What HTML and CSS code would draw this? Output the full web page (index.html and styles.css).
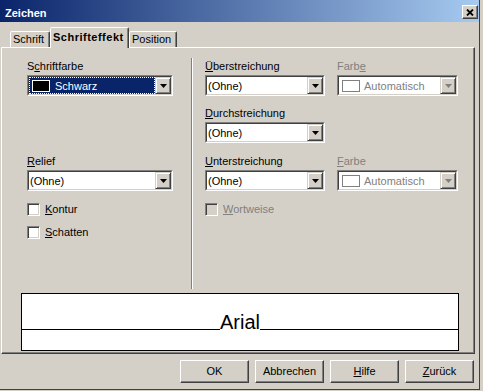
FILE: index.html
```html
<!DOCTYPE html>
<html>
<head>
<meta charset="utf-8">
<link rel="stylesheet" href="styles.css">
</head>
<body>
<div class="window">
  <div class="titlebar">
    <span class="title">Zeichen</span>
    <span class="close"><svg width="8" height="7" viewBox="0 0 8 7"><path d="M1 0.5 L7 6.5 M7 0.5 L1 6.5" stroke="#000" stroke-width="1.8" fill="none"/></svg></span>
  </div>
  <div class="tabs">
    <div class="tab t1">Schrift</div>
    <div class="tab active">Schrifteffekt</div>
    <div class="tab t3">Position</div>
  </div>
  <div class="panel">
    <div class="fields">
      <div class="field c1 r1">
        <div class="lbl">S<u>c</u>hriftfarbe</div>
        <div class="lb w146"><div class="lb-in"><div class="lb-text sel"><span class="sw black"></span>Schwarz</div><div class="dd"><svg width="7" height="4" viewBox="0 0 7 4"><path d="M0 0H7L3.5 4Z" fill="#000"/></svg></div></div></div>
      </div>
      <div class="sep"></div>
      <div class="field c3 r1">
        <div class="lbl"><u>Ü</u>berstreichung</div>
        <div class="lb w120"><div class="lb-in"><div class="lb-text">(Ohne)</div><div class="dd"><svg width="7" height="4" viewBox="0 0 7 4"><path d="M0 0H7L3.5 4Z" fill="#000"/></svg></div></div></div>
      </div>
      <div class="field c4 r1">
        <div class="lbl dis">Farb<u>e</u></div>
        <div class="lb w121"><div class="lb-in"><div class="lb-text dis"><span class="sw white"></span>Automatisch</div><div class="dd"><svg width="7" height="4" viewBox="0 0 7 4"><path d="M0 0H7L3.5 4Z" fill="#808080"/></svg></div></div></div>
      </div>
      <div class="field c3 r2">
        <div class="lbl"><u>D</u>urchstreichung</div>
        <div class="lb w120"><div class="lb-in"><div class="lb-text">(Ohne)</div><div class="dd"><svg width="7" height="4" viewBox="0 0 7 4"><path d="M0 0H7L3.5 4Z" fill="#000"/></svg></div></div></div>
      </div>
      <div class="field c1 r3">
        <div class="lbl"><u>R</u>elief</div>
        <div class="lb w146"><div class="lb-in"><div class="lb-text">(Ohne)</div><div class="dd"><svg width="7" height="4" viewBox="0 0 7 4"><path d="M0 0H7L3.5 4Z" fill="#000"/></svg></div></div></div>
      </div>
      <div class="field c3 r3">
        <div class="lbl"><u>U</u>nterstreichung</div>
        <div class="lb w120"><div class="lb-in"><div class="lb-text">(Ohne)</div><div class="dd"><svg width="7" height="4" viewBox="0 0 7 4"><path d="M0 0H7L3.5 4Z" fill="#000"/></svg></div></div></div>
      </div>
      <div class="field c4 r3">
        <div class="lbl dis"><u>F</u>arbe</div>
        <div class="lb w121"><div class="lb-in"><div class="lb-text dis"><span class="sw white"></span>Automatisch</div><div class="dd"><svg width="7" height="4" viewBox="0 0 7 4"><path d="M0 0H7L3.5 4Z" fill="#808080"/></svg></div></div></div>
      </div>
      <div class="check c1 r4"><span class="cb"></span><span><u>K</u>ontur</span></div>
      <div class="check c3 r4"><span class="cb off"></span><span class="dis"><u>W</u>ortweise</span></div>
      <div class="check c1 r5"><span class="cb"></span><span><u>S</u>chatten</span></div>
    </div>
    <div class="preview">
      <div class="pv-row"><div class="seg"></div><div class="pv-text">Arial</div><div class="seg"></div></div>
    </div>
  </div>
  <div class="buttons">
    <div class="btn">OK</div>
    <div class="btn">Abbrechen</div>
    <div class="btn"><u>H</u>ilfe</div>
    <div class="btn"><u>Z</u>urück</div>
  </div>
</div>
</body>
</html>
```

FILE: styles.css
```css
html, body {
  margin: 0;
  padding: 0;
}
body {
  width: 483px;
  height: 391px;
  overflow: hidden;
  background: #d4d0c8;
  font-family: "Liberation Sans", Arial, sans-serif;
  font-size: 11px;
  color: #000;
}
u {
  text-decoration: underline;
  text-underline-offset: 1px;
}
.window {
  width: 480px;
  height: 390px;
  box-sizing: border-box;
  border-right: 1px solid #404040;
  border-bottom: 1px solid #404040;
  display: flex;
  flex-direction: column;
}
.titlebar {
  height: 22px;
  flex: none;
  background: linear-gradient(to right, #0a246a, #a6caf0);
  display: flex;
  align-items: flex-start;
  justify-content: space-between;
  padding-left: 5px;
}
.title {
  color: #fff;
  font-weight: bold;
  font-size: 11px;
  line-height: 13px;
  margin-top: 7px;
}
.close {
  width: 16px;
  height: 14px;
  margin-top: 5px;
  margin-right: 1px;
  box-sizing: border-box;
  background: #d4d0c8;
  border: 1px solid;
  border-color: #fff #404040 #404040 #fff;
  box-shadow: inset -1px -1px #808080;
  display: flex;
  align-items: center;
  justify-content: center;
}
.tabs {
  display: flex;
  align-items: flex-end;
  height: 20px;
  margin-top: 5px;
  padding-left: 10px;
  flex: none;
}
.tab {
  height: 16px;
  box-sizing: border-box;
  border: 1px solid;
  border-bottom: none;
  border-color: #fff #404040 transparent #fff;
  box-shadow: inset -1px 0 #808080;
  border-radius: 2px 2px 0 0;
  padding: 0 2px;
  display: flex;
  align-items: center;
  line-height: 13px;
  background: #d4d0c8;
  white-space: nowrap;
  overflow: hidden;
}
.t1 { width: 40px; }
.t3 { width: 48px; }
.tab.active {
  width: 79px;
  height: 21px;
  margin-bottom: -1px;
  position: relative;
  z-index: 1;
  font-weight: bold;
  font-size: 11px;
  letter-spacing: 0.5px;
  padding: 0 0 1px 2px;
}
.panel {
  margin-left: 1px;
  width: 474px;
  box-sizing: border-box;
  border: 1px solid;
  border-color: #fff #404040 #404040 #fff;
  box-shadow: inset -1px -1px #808080;
  padding: 12px 0 2px 0;
  flex: none;
}
.fields {
  display: grid;
  margin-left: 25px;
  grid-template-columns: 146px 32px 132px 121px;
  grid-template-rows: 47px 48px 48px 23px 63px;
  align-items: start;
}
.c1 { grid-column: 1; }
.c3 { grid-column: 3; }
.c4 { grid-column: 4; }
.r1 { grid-row: 1; }
.r2 { grid-row: 2; }
.r3 { grid-row: 3; }
.r4 { grid-row: 4; }
.r5 { grid-row: 5; }
.sep {
  grid-column: 2;
  grid-row: 1 / 6;
  align-self: stretch;
  width: 2px;
  box-sizing: border-box;
  margin-left: 18px;
  margin-top: -2px;
  border-left: 1px solid #808080;
  border-right: 1px solid #fff;
}
.field {
  display: flex;
  flex-direction: column;
  gap: 2px;
}
.lbl {
  height: 13px;
  line-height: 13px;
  white-space: nowrap;
}
.dis { color: #808080; }
.lb {
  height: 21px;
  box-sizing: border-box;
  border: 1px solid;
  border-color: #808080 #fff #fff #808080;
  background: #fff;
  display: flex;
}
.w146 { width: 146px; }
.w120 { width: 120px; }
.w121 { width: 121px; }
.lb-in {
  flex: 1;
  display: flex;
  border: 1px solid;
  border-color: #404040 #d4d0c8 #d4d0c8 #404040;
  min-width: 0;
}
.lb-text {
  flex: 1;
  display: flex;
  align-items: center;
  padding-left: 1px;
  white-space: nowrap;
  overflow: hidden;
}
.lb-text.sel {
  background: #0a246a;
  color: #fff;
  outline: 1px dotted #fff;
  outline-offset: -1px;
  padding-left: 3px;
}
.lb-text.dis {
  padding-left: 3px;
}
.sw {
  width: 18px;
  height: 12px;
  box-sizing: border-box;
  margin-right: 5px;
  flex: none;
}
.sw.black {
  background: #000;
  border: 1px solid #fff;
}
.sw.white {
  background: #fff;
  border: 1px solid #808080;
  margin-right: 4px;
}
.dd {
  width: 16px;
  height: 17px;
  box-sizing: border-box;
  flex: none;
  background: #d4d0c8;
  border: 1px solid;
  border-color: #d4d0c8 #404040 #404040 #d4d0c8;
  box-shadow: inset 1px 1px #fff, inset -1px -1px #808080;
  display: flex;
  align-items: center;
  justify-content: center;
}
.check {
  display: flex;
  align-items: center;
  gap: 5px;
  height: 13px;
  line-height: 13px;
  white-space: nowrap;
}
.cb {
  width: 13px;
  height: 13px;
  box-sizing: border-box;
  flex: none;
  border: 1px solid;
  border-color: #808080 #fff #fff #808080;
  box-shadow: inset 1px 1px #404040, inset -1px -1px #d4d0c8;
  background: #fff;
}
.cb.off {
  background: #d4d0c8;
}
.preview {
  margin: 4px 0 0 19px;
  width: 438px;
  height: 58px;
  box-sizing: border-box;
  border: 1px solid #000;
  background: #fff;
}
.pv-row {
  display: flex;
  margin-top: 18px;
}
.seg {
  flex: 1;
  height: 17px;
  border-bottom: 1px solid #000;
}
.pv-text {
  font-family: "Liberation Sans", Arial, sans-serif;
  font-size: 20px;
  line-height: 20px;
}
.buttons {
  display: flex;
  justify-content: flex-end;
  gap: 6px;
  margin-top: 6px;
  padding-right: 5px;
}
.btn {
  width: 69px;
  height: 23px;
  box-sizing: border-box;
  border: 1px solid;
  border-color: #fff #404040 #404040 #fff;
  box-shadow: inset -1px -1px #808080;
  display: flex;
  align-items: center;
  justify-content: center;
  line-height: 13px;
}
```
